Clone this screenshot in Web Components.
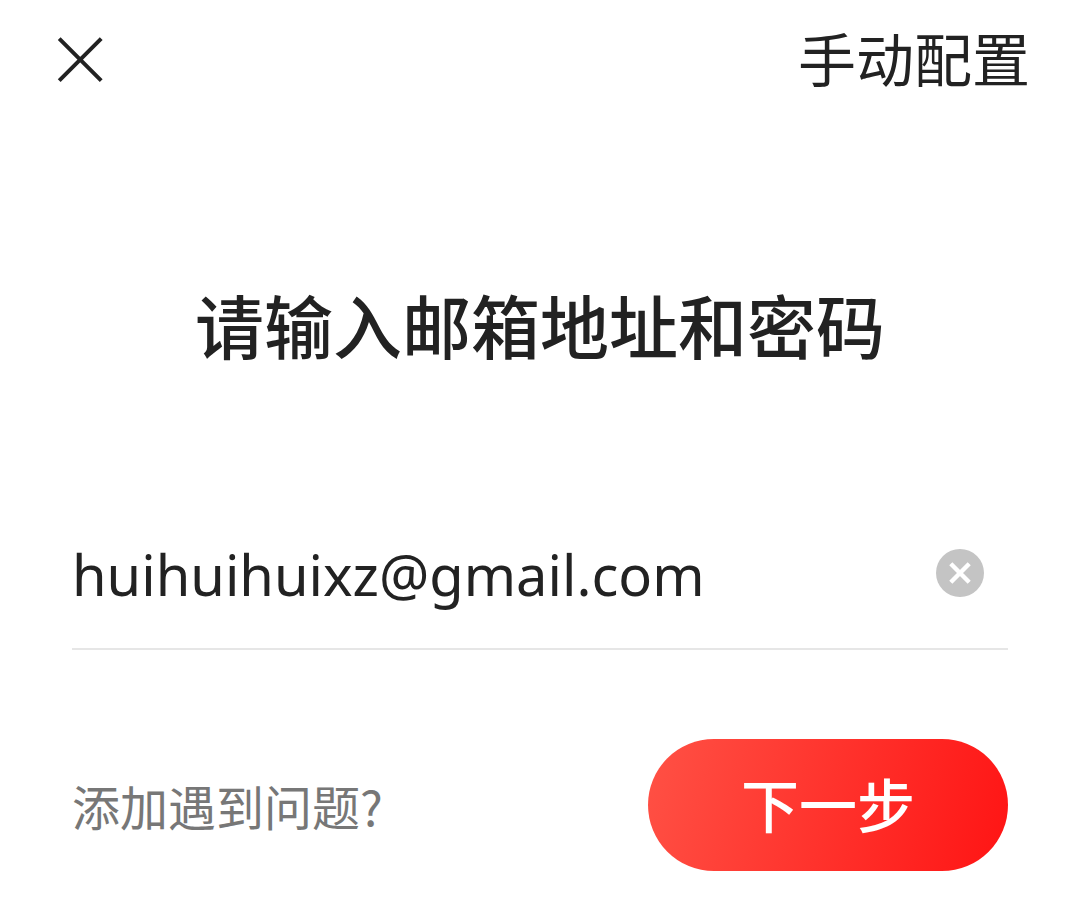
<!DOCTYPE html>
<html lang="zh-CN">
<head>
<meta charset="utf-8">
<meta name="viewport" content="width=device-width, initial-scale=1">
<title>添加邮箱</title>
<style>
  body {
    margin: 0;
    background: #fff;
    color: #222;
    font-family: "Noto Sans CJK SC", sans-serif;
  }
</style>
</head>
<body>
<mail-setup></mail-setup>

<template id="mail-setup">
  <style>
    :host { display: block; }
    h1 {
      margin: 0;
      padding: 152px 48px 0;
      font-size: 69px;
      line-height: 104px;
      font-weight: 500;
      text-align: center;
    }
    form { padding: 122px 72px 24px; }
    footer {
      display: flex;
      align-items: center;
      justify-content: space-between;
      padding-top: 89px;
    }
    footer a {
      color: #777;
      font-size: 48px;
      line-height: 72px;
      text-decoration: none;
    }
  </style>
  <top-bar>手动配置</top-bar>
  <main>
    <h1>请输入邮箱地址和密码</h1>
    <form>
      <clearable-field label="邮箱地址" value="huihuihuixz@gmail.com"></clearable-field>
      <footer>
        <a href="#help">添加遇到问题?</a>
        <pill-button>下一步</pill-button>
      </footer>
    </form>
  </main>
</template>

<template id="top-bar">
  <style>
    :host {
      display: flex;
      align-items: center;
      justify-content: space-between;
      height: 120px;
      padding: 0 50px 0 56px;
    }
    button {
      display: flex;
      padding: 0;
      border: 0;
      background: none;
      color: inherit;
    }
    a {
      padding-bottom: 6px;
      color: inherit;
      font-size: 58px;
      line-height: 88px;
      text-decoration: none;
    }
  </style>
  <button type="button" aria-label="关闭">
    <svg width="48" height="48" viewBox="0 0 48 48" fill="none" stroke="currentColor" stroke-width="4" aria-hidden="true">
      <path d="M3.2 2.6 45.2 44.6M45.2 2.6 3.2 44.6"/>
    </svg>
  </button>
  <a href="#manual"><slot></slot></a>
</template>

<template id="clearable-field">
  <style>
    :host {
      display: flex;
      align-items: center;
      height: 150px;
      padding-right: 24px;
      border-bottom: 2px solid #e6e6e6;
    }
    input {
      flex: 1;
      min-width: 0;
      padding: 2px 0 0;
      border: 0;
      outline: 0;
      background: none;
      color: inherit;
      font-family: "Noto Sans", "Noto Sans CJK SC", sans-serif;
      font-size: 56px;
      line-height: 80px;
    }
    button {
      display: flex;
      padding: 0;
      border: 0;
      background: none;
    }
  </style>
  <input type="email">
  <button type="button" aria-label="清除">
    <svg width="48" height="48" viewBox="0 0 48 48" aria-hidden="true">
      <circle cx="24" cy="24" r="24" fill="#c4c4c4"/>
      <path d="M14.8 14.8 33.2 33.2M33.2 14.8 14.8 33.2" stroke="#fff" stroke-width="4.4"/>
    </svg>
  </button>
</template>

<template id="pill-button">
  <style>
    :host { display: block; flex: none; }
    button {
      display: block;
      width: 360px;
      height: 132px;
      padding: 0 0 4px;
      border: 0;
      border-radius: 66px;
      background: linear-gradient(105deg, #ff5145 0%, #ff1414 100%);
      color: #fff;
      font-family: inherit;
      font-size: 58px;
      font-weight: 500;
      line-height: 88px;
    }
  </style>
  <button type="submit"><slot></slot></button>
</template>

<script>
  class TemplateElement extends HTMLElement {
    constructor() {
      super();
      const template = document.getElementById(this.localName);
      this.attachShadow({ mode: 'open' }).append(template.content.cloneNode(true));
    }
  }

  class TopBar extends TemplateElement {}
  class PillButton extends TemplateElement {}
  class MailSetup extends TemplateElement {}

  class ClearableField extends TemplateElement {
    connectedCallback() {
      const input = this.shadowRoot.querySelector('input');
      input.value = this.getAttribute('value') || '';
      input.setAttribute('aria-label', this.getAttribute('label') || '');
      this.shadowRoot.querySelector('button').addEventListener('click', () => {
        input.value = '';
        input.focus();
      });
    }
  }

  customElements.define('top-bar', TopBar);
  customElements.define('clearable-field', ClearableField);
  customElements.define('pill-button', PillButton);
  customElements.define('mail-setup', MailSetup);
</script>
</body>
</html>
